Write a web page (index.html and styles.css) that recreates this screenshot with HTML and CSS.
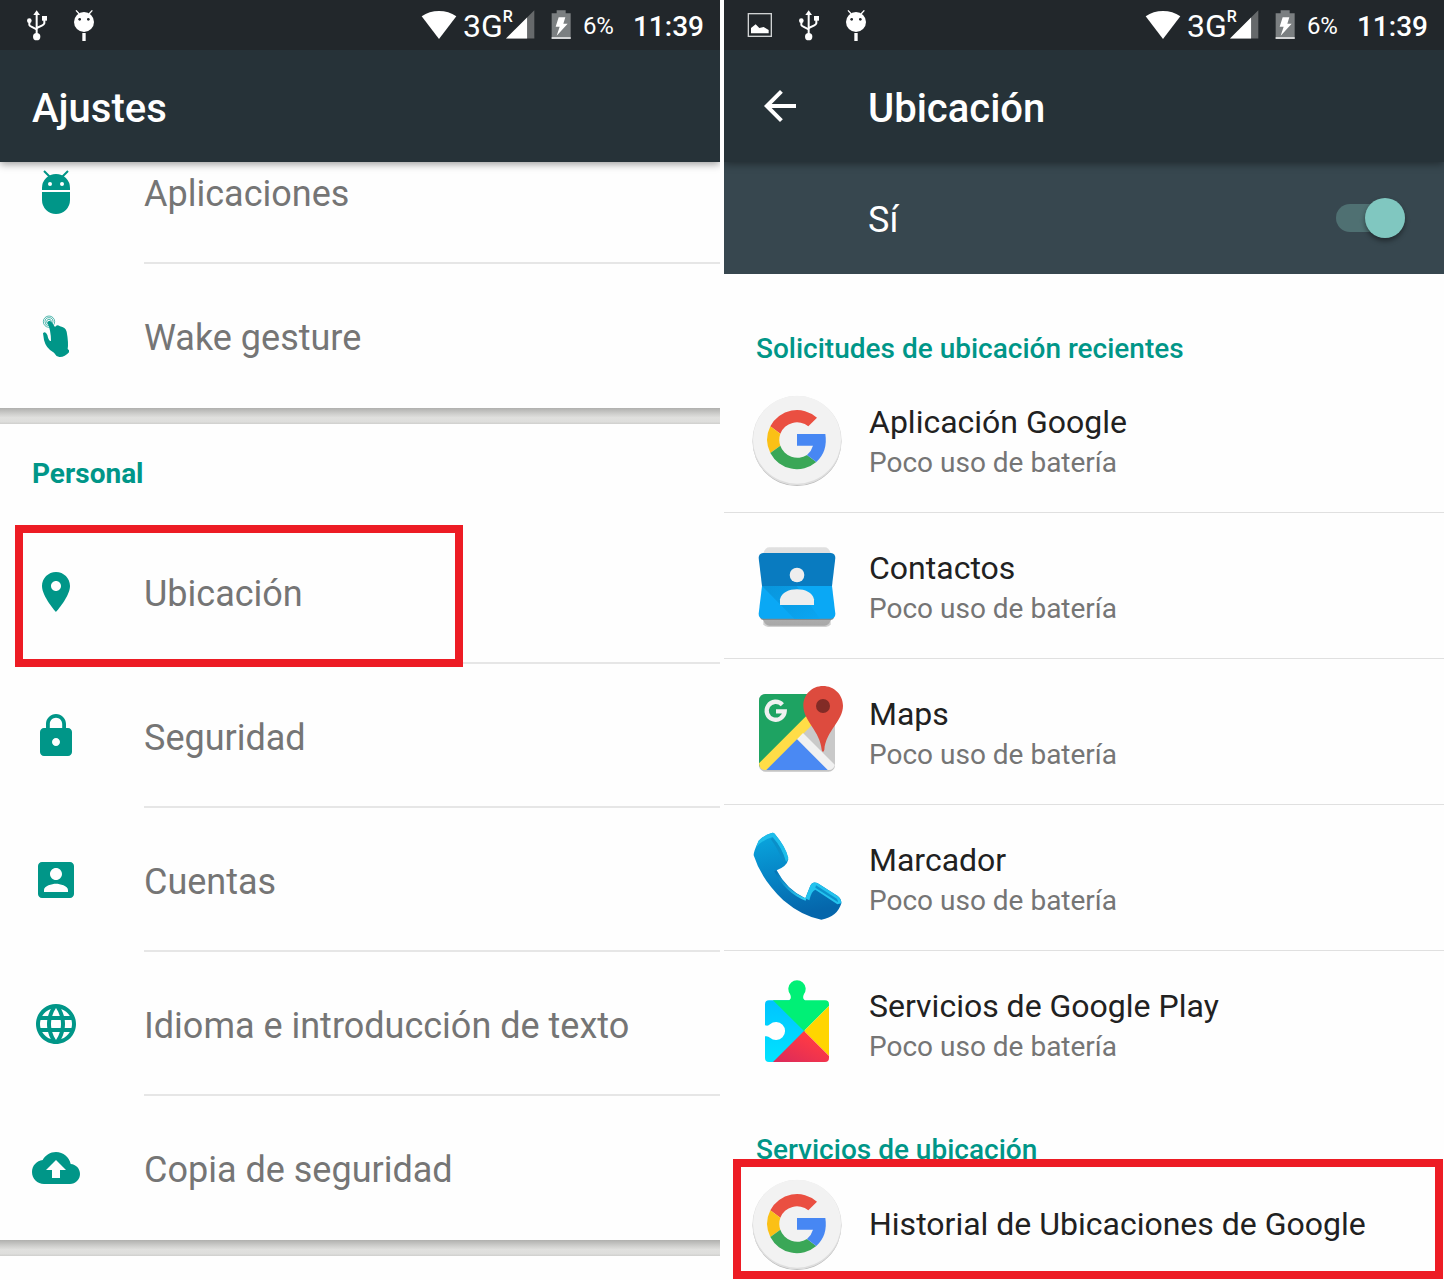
FILE: index.html
```
<!DOCTYPE html>
<html lang="es">
<head>
    <meta charset="UTF-8">
    <meta name="viewport" content="width=device-width, initial-scale=1">
    <title>Ajustes - Ubicación</title>
    <link rel="stylesheet" href="styles.css">
</head>
<body>
    <!-- shared symbols -->
    <svg class="sprite" aria-hidden="true">
        <symbol id="i-usb" viewBox="39 0 144 150">
            <g fill="none" stroke="#fff" stroke-width="6">
                <path d="M110 40V106"/>
                <path d="M88 64V75Q89 78 94 80L110 88"/>
                <path d="M133 58V70Q132 74 127 76L110 84"/>
            </g>
            <path fill="#fff" d="M110 31L120 45H100Z"/>
            <circle cx="88" cy="62" r="7" fill="#fff"/>
            <rect x="126" y="48" width="15" height="14" fill="#fff"/>
            <circle cx="110" cy="110" r="11" fill="#fff"/>
        </symbol>
        <symbol id="i-debug" viewBox="183 0 144 150">
            <path d="M228 31L238 42M277 31L267 42" stroke="#fff" stroke-width="4"/>
            <circle cx="252" cy="66" r="30" fill="#fff"/>
            <circle cx="239" cy="58" r="4" fill="#22272b"/>
            <circle cx="265" cy="58" r="4" fill="#22272b"/>
            <rect x="247" y="99" width="10" height="24" fill="#fff"/>
        </symbol>
        <symbol id="i-wifi" viewBox="66 0 108 150">
            <path fill="#fff" d="M68 49Q91 33 120 33T172 49L120 117Z"/>
        </symbol>
        <symbol id="i-signal" viewBox="323 0 88 150">
            <path fill="#66696b" d="M323 116L409 30V116Z"/>
            <path fill="#fff" d="M323 116L387 52V116Z"/>
        </symbol>
        <symbol id="i-battery" viewBox="457 0 60 150">
            <path fill="#7b7f81" d="M459 40H474V31H501V40H516V117H459Z"/>
            <path fill="#d5d6d7" d="M459 111H516V117H459Z"/>
            <path fill="#fff" d="M480 52H500L494 71H507L474 107L483 80H471Z"/>
        </symbol>
        <symbol id="i-google" viewBox="27 33 288 288">
            <circle cx="171" cy="182" r="133" fill="#b9b9b9"/>
            <circle cx="171" cy="179" r="134" fill="#dedede"/>
            <circle cx="171" cy="176" r="132" fill="#f2f2f2"/>
            <path fill="#ea4f41" d="M91 136A90 90 0 0 1 231 110L205 136A54 54 0 0 0 121 158Z"/>
            <path fill="#fbc016" d="M91 136A90 90 0 0 0 91 216L121 194A54 54 0 0 1 121 158Z"/>
            <path fill="#3aa757" d="M91 216A90 90 0 0 0 229 243L201 222A54 54 0 0 1 121 194Z"/>
            <path fill="#4787f3" d="M171 159H256Q264 211 229 243L201 222Q214 211 219 194H171Z"/>
        </symbol>
    </svg>

    <main class="screens">
        <!-- Ajustes -->
        <section class="screen">
            <div class="status-bar">
                <div class="notifications">
                    <svg class="notif-icon"><use href="#i-usb"/></svg>
                    <svg class="notif-icon"><use href="#i-debug"/></svg>
                </div>
                <div class="system">
                    <svg class="wifi"><use href="#i-wifi"/></svg>
                    <span class="network">3G</span>
                    <span class="roaming">R</span>
                    <svg class="signal"><use href="#i-signal"/></svg>
                    <svg class="battery"><use href="#i-battery"/></svg>
                    <span class="percent">6%</span>
                    <span class="clock">11:39</span>
                </div>
            </div>
            <header class="app-bar">
                <h1>Ajustes</h1>
            </header>

            <nav class="settings">
                <div class="card">
                    <a class="setting" href="#">
                        <svg class="setting-icon" viewBox="0 0 48 48">
                            <path d="M12 3L18 9M36 3L30 9" stroke="#009688" stroke-width="2"/>
                            <path d="M10 22V20A14 14 0 0 1 38 20V22ZM10 24H38V32A14 14 0 0 1 10 32Z"/>
                            <circle cx="18" cy="16" r="2" fill="#fff"/>
                            <circle cx="30" cy="16" r="2" fill="#fff"/>
                        </svg>
                        <span class="setting-name">Aplicaciones</span>
                    </a>
                    <a class="setting" href="#">
                        <svg class="setting-icon" viewBox="96 36 144 144">
                            <g fill="none" stroke="#009688" stroke-width="2">
                                <circle cx="147" cy="65" r="17"/>
                                <circle cx="147" cy="65" r="12"/>
                                <circle cx="147" cy="65" r="7"/>
                            </g>
                            <path d="M142 67Q148 58 155 67L165 81Q171 71 180 79Q196 82 200 95Q206 128 203 147L207 151V157Q194 172 178 171Q167 168 162 158Q138 146 132 120L129 100Q136 92 142 105Q146 124 153 123Q153 92 142 67Z"/>
                        </svg>
                        <span class="setting-name">Wake gesture</span>
                    </a>
                </div>

                <div class="card">
                    <h2 class="card-title">Personal</h2>
                    <a class="setting marked" href="#">
                        <svg class="setting-icon" viewBox="0 0 24 24">
                            <path d="M12 2C8.13 2 5 5.13 5 9c0 5.25 7 13 7 13s7-7.75 7-13c0-3.87-3.13-7-7-7zm0 9.5c-1.38 0-2.5-1.12-2.5-2.5s1.12-2.5 2.5-2.5 2.5 1.12 2.5 2.5-1.12 2.5-2.5 2.5z"/>
                        </svg>
                        <span class="setting-name">Ubicación</span>
                    </a>
                    <a class="setting" href="#">
                        <svg class="setting-icon" viewBox="0 0 24 24">
                            <path d="M18 8h-1V6c0-2.76-2.24-5-5-5S7 3.24 7 6v2H6c-1.1 0-2 .9-2 2v10c0 1.1.9 2 2 2h12c1.1 0 2-.9 2-2V10c0-1.1-.9-2-2-2zm-6 9c-1.1 0-2-.9-2-2s.9-2 2-2 2 .9 2 2-.9 2-2 2zm3.1-9H8.9V6c0-1.71 1.39-3.1 3.1-3.1 1.71 0 3.1 1.39 3.1 3.1v2z"/>
                        </svg>
                        <span class="setting-name">Seguridad</span>
                    </a>
                    <a class="setting" href="#">
                        <svg class="setting-icon" viewBox="0 0 24 24">
                            <path d="M3 5v14c0 1.1.89 2 2 2h14c1.1 0 2-.9 2-2V5c0-1.1-.9-2-2-2H5c-1.11 0-2 .9-2 2zm12 4c0 1.66-1.34 3-3 3s-3-1.34-3-3 1.34-3 3-3 3 1.34 3 3zm-9 8c0-2 4-3.1 6-3.1s6 1.1 6 3.1v1H6v-1z"/>
                        </svg>
                        <span class="setting-name">Cuentas</span>
                    </a>
                    <a class="setting" href="#">
                        <svg class="setting-icon" viewBox="0 0 24 24">
                            <path d="M11.99 2C6.47 2 2 6.48 2 12s4.47 10 9.99 10C17.52 22 22 17.52 22 12S17.52 2 11.99 2zm6.93 6h-2.95c-.32-1.25-.78-2.45-1.38-3.56 1.84.63 3.37 1.91 4.33 3.56zM12 4.04c.83 1.2 1.48 2.53 1.91 3.96h-3.82c.43-1.43 1.08-2.76 1.91-3.96zM4.26 14C4.1 13.36 4 12.69 4 12s.1-1.36.26-2h3.38c-.08.66-.14 1.32-.14 2 0 .68.06 1.34.14 2H4.26zm.82 2h2.95c.32 1.25.78 2.45 1.38 3.56-1.84-.63-3.37-1.9-4.33-3.56zm2.95-8H5.08c.96-1.66 2.49-2.93 4.33-3.56C8.81 5.55 8.35 6.75 8.03 8zM12 19.96c-.83-1.2-1.48-2.53-1.91-3.96h3.82c-.43 1.43-1.08 2.76-1.91 3.96zM14.34 14H9.66c-.09-.66-.16-1.32-.16-2 0-.68.07-1.35.16-2h4.68c.09.65.16 1.32.16 2 0 .68-.07 1.34-.16 2zm.25 5.56c.6-1.11 1.06-2.31 1.38-3.56h2.95c-.96 1.65-2.49 2.93-4.33 3.56zM16.36 14c.08-.66.14-1.32.14-2 0-.68-.06-1.34-.14-2h3.38c.16.64.26 1.31.26 2s-.1 1.36-.26 2h-3.38z"/>
                        </svg>
                        <span class="setting-name">Idioma e introducción de texto</span>
                    </a>
                    <a class="setting" href="#">
                        <svg class="setting-icon" viewBox="0 0 24 24">
                            <path d="M19.35 10.04C18.67 6.59 15.64 4 12 4 9.11 4 6.6 5.64 5.35 8.04 2.34 8.36 0 10.91 0 14c0 3.31 2.69 6 6 6h13c2.76 0 5-2.24 5-5 0-2.64-2.05-4.78-4.65-4.96zM14 13v4h-4v-4H7l5-5 5 5h-3z"/>
                        </svg>
                        <span class="setting-name">Copia de seguridad</span>
                    </a>
                </div>
            </nav>
        </section>

        <!-- Ubicación -->
        <section class="screen">
            <div class="status-bar">
                <div class="notifications">
                    <svg class="notif-icon" viewBox="39 0 144 150">
                        <rect x="73" y="41" width="69" height="68" fill="none" stroke="#d0d2d3" stroke-width="4"/>
                        <path fill="#fff" d="M81 100V84L95 73L106 84L119 81L134 90V100Z"/>
                    </svg>
                    <svg class="notif-icon"><use href="#i-usb"/></svg>
                    <svg class="notif-icon"><use href="#i-debug"/></svg>
                </div>
                <div class="system">
                    <svg class="wifi"><use href="#i-wifi"/></svg>
                    <span class="network">3G</span>
                    <span class="roaming">R</span>
                    <svg class="signal"><use href="#i-signal"/></svg>
                    <svg class="battery"><use href="#i-battery"/></svg>
                    <span class="percent">6%</span>
                    <span class="clock">11:39</span>
                </div>
            </div>
            <header class="app-bar">
                <button class="back" type="button" aria-label="Atrás">
                    <svg viewBox="0 0 24 24"><path d="M20 11H7.83l5.59-5.59L12 4l-8 8 8 8 1.41-1.41L7.83 13H20v-2z"/></svg>
                </button>
                <h1>Ubicación</h1>
            </header>
            <div class="switch-bar">
                <label for="location">Sí</label>
                <input class="switch" id="location" type="checkbox" checked>
            </div>

            <div class="location">
                <h2 class="category">Solicitudes de ubicación recientes</h2>
                <a class="app" href="#">
                    <svg class="app-icon"><use href="#i-google"/></svg>
                    <span class="app-text">
                        <span class="app-name">Aplicación Google</span>
                        <span class="app-usage">Poco uso de batería</span>
                    </span>
                </a>
                <a class="app" href="#">
                    <svg class="app-icon" viewBox="27 471 288 288">
                        <defs>
                            <linearGradient id="sheet" x1="0" y1="0" x2="0" y2="1">
                                <stop offset="0.1" stop-color="#e0e0e0"/>
                                <stop offset="1" stop-color="#a8a8a8"/>
                            </linearGradient>
                            <linearGradient id="fold" x1="0" y1="0" x2="1" y2="1">
                                <stop offset="0" stop-color="#0895dc"/>
                                <stop offset="1" stop-color="#0aa6f2"/>
                            </linearGradient>
                        </defs>
                        <path fill="#d0d0d0" d="M70 520H272V730Q268 738 258 738H84Q74 738 70 730Z"/>
                        <path fill="url(#sheet)" d="M70 516Q76 499 88 499H254Q266 499 272 516V718Q266 734 254 734H88Q76 734 70 718Z"/>
                        <path fill="#7d8a90" d="M60 708H282Q280 717 272 717H70Q62 717 60 708Z"/>
                        <path fill="#097bc0" d="M69 516H273Q286 518 286 531L276 615H66L56 531Q56 518 69 516Z"/>
                        <path fill="#0aa8f5" d="M66 615H276L286 698Q286 712 273 713H69Q56 712 56 698Z"/>
                        <path fill="url(#fold)" d="M66 615H170L240 713H163Z"/>
                        <circle cx="171" cy="582" r="22" fill="#eee"/>
                        <path fill="#eee" d="M120 672V655C125 634 147 625 171 625S217 634 222 655V672Z"/>
                    </svg>
                    <span class="app-text">
                        <span class="app-name">Contactos</span>
                        <span class="app-usage">Poco uso de batería</span>
                    </span>
                </a>
                <a class="app" href="#">
                    <svg class="app-icon" viewBox="27 39 288 288">
                        <defs>
                            <clipPath id="map-tile"><rect x="57" y="69" width="228" height="228" rx="19"/></clipPath>
                        </defs>
                        <rect x="57" y="73" width="228" height="229" rx="19" fill="#c4c4c4"/>
                        <g clip-path="url(#map-tile)">
                            <rect x="57" y="69" width="228" height="228" fill="#c9c9c9"/>
                            <path fill="#1ea362" d="M57 69H285L57 290Z"/>
                            <path fill="#ffdd47" d="M57 277L210 124L232 146L80 297H57Z"/>
                            <path fill="#f1f1f1" d="M189 186L285 282V297H262L171 205Z"/>
                            <path fill="#4a89f3" d="M171 205L263 297H79Z"/>
                        </g>
                        <path fill="none" stroke="#f1f1f1" stroke-width="13" d="M127 101A27 27 0 1 0 134 121H108"/>
                        <path fill="#dd4b3e" d="M249 45C216 45 190 71 190 104C190 150 241 180 245 236Q246 242 249 242T253 236C257 180 309 150 309 104C309 71 282 45 249 45Z"/>
                        <circle cx="249" cy="105" r="21" fill="#822b26"/>
                    </svg>
                    <span class="app-text">
                        <span class="app-name">Maps</span>
                        <span class="app-usage">Poco uso de batería</span>
                    </span>
                </a>
                <a class="app" href="#">
                    <svg class="app-icon" viewBox="27 477 288 288">
                        <defs>
                            <linearGradient id="handset" x1="0" y1="0" x2="0.2" y2="1">
                                <stop offset="0" stop-color="#0aa9e0"/>
                                <stop offset="0.45" stop-color="#0689c9"/>
                                <stop offset="1" stop-color="#0566ab"/>
                            </linearGradient>
                            <linearGradient id="inner-edge" x1="0" y1="0" x2="1" y2="1">
                                <stop offset="0" stop-color="#0573b5"/>
                                <stop offset="1" stop-color="#2fd0f5"/>
                            </linearGradient>
                        </defs>
                        <path fill="url(#handset)" d="M95 486Q76 490 56 509Q40 543 41 553Q62 622 130 688Q188 737 244 746Q292 738 304 697Q305 684 292 674L232 636Q218 630 211 644L196 682Q140 656 110 598Q141 586 145 565Q139 530 104 488Q100 484 95 486Z"/>
                        <path fill="#1fbdea" d="M95 486Q76 490 56 509L48 530Q64 508 98 498Q126 530 138 572Q144 568 145 560Q138 528 104 488Q100 484 95 486Z"/>
                        <path fill="#0b8fc8" d="M98 500Q126 530 136 571L131 575Q112 530 92 504Z"/>
                        <path fill="none" stroke="url(#inner-edge)" stroke-width="7" d="M106 599Q138 662 198 686"/>
                        <path fill="#24c3ee" d="M211 644Q218 630 232 636L292 674Q305 684 304 697L292 700L226 656Q214 660 208 688L196 682Z"/>
                        <path fill="#0c93cd" d="M228 643L288 682Q296 688 294 694L226 650Z"/>
                    </svg>
                    <span class="app-text">
                        <span class="app-name">Marcador</span>
                        <span class="app-usage">Poco uso de batería</span>
                    </span>
                </a>
                <a class="app" href="#">
                    <svg class="app-icon" viewBox="27 45 288 288">
                        <defs>
                            <clipPath id="puzzle">
                                <path d="M87 118H148Q156 112 150 99A26 26 0 1 1 192 99Q186 112 194 118H255A12 12 0 0 1 267 130V291A12 12 0 0 1 255 303H87A12 12 0 0 1 75 291V226Q84 224 90 230A27 27 0 1 0 90 190Q84 197 75 193V130A12 12 0 0 1 87 118Z"/>
                            </clipPath>
                            <linearGradient id="play-blue" x1="0" y1="0" x2="0" y2="1">
                                <stop offset="0" stop-color="#00c3ff"/>
                                <stop offset="1" stop-color="#00e4ff"/>
                            </linearGradient>
                            <linearGradient id="play-red" x1="1" y1="0" x2="0" y2="1">
                                <stop offset="0.3" stop-color="#ff3a44"/>
                                <stop offset="1" stop-color="#d92a5c"/>
                            </linearGradient>
                        </defs>
                        <g clip-path="url(#puzzle)">
                            <rect x="75" y="115" width="120" height="190" fill="url(#play-blue)"/>
                            <path fill="#00f076" d="M99 118V45H275V127L192 210Z"/>
                            <path fill="#ffd500" d="M192 210L275 127V293Z"/>
                            <path fill="url(#play-red)" d="M192 210L285 303H99Z"/>
                        </g>
                    </svg>
                    <span class="app-text">
                        <span class="app-name">Servicios de Google Play</span>
                        <span class="app-usage">Poco uso de batería</span>
                    </span>
                </a>

                <h2 class="category">Servicios de ubicación</h2>
                <a class="app app-single marked" href="#">
                    <svg class="app-icon"><use href="#i-google"/></svg>
                    <span class="app-name">Historial de Ubicaciones de Google</span>
                </a>
            </div>
        </section>
    </main>
</body>
</html>
```
FILE: styles.css
```
:root {
    --accent: #009688;
    --mark: #ed1c24;
    --bar: #263238;
    --bar-light: #37474f;
}

*,
*::before,
*::after {
    box-sizing: border-box;
}

body {
    margin: 0;
    font-family: Roboto, "Noto Sans", sans-serif;
    background: #fefefe;
}

h1, h2 {
    margin: 0;
}

a {
    color: inherit;
    text-decoration: none;
}

.sprite {
    position: absolute;
    width: 0;
    height: 0;
}

.screens {
    display: grid;
    grid-template-columns: 1fr 1fr;
    gap: 4px;
    min-height: 100vh;
}

.screen {
    min-width: 0;
    overflow: hidden;
}

/* status bar */
.status-bar {
    position: relative;
    z-index: 2;
    display: flex;
    justify-content: space-between;
    height: 50px;
    padding: 0 16px 0 13px;
    background: #22272b;
    color: #fff;
}

.notifications,
.system {
    display: flex;
    align-items: center;
}

.notif-icon {
    width: 48px;
    height: 50px;
}

.wifi {
    width: 36px;
    height: 50px;
    margin-right: 6px;
}

.network {
    padding-top: 2px;
    font-size: 32px;
    line-height: 50px;
}

.roaming {
    align-self: flex-start;
    font-size: 16px;
    font-weight: 500;
    line-height: 34px;
}

.signal {
    width: 29px;
    height: 50px;
    margin-left: -7px;
}

.battery {
    width: 20px;
    height: 50px;
    margin: 0 12px 0 16px;
}

.percent {
    margin-right: 19px;
    padding-top: 2px;
    font-size: 24px;
    line-height: 50px;
}

.clock {
    padding-top: 4px;
    font-size: 28px;
    font-weight: 500;
    line-height: 50px;
}

/* app bar */
.app-bar {
    position: relative;
    z-index: 1;
    display: flex;
    align-items: center;
    height: 112px;
    padding: 0 32px;
    background: var(--bar);
    color: #fff;
    box-shadow: 0 2px 8px rgba(0, 0, 0, 0.4);
}

.app-bar h1 {
    padding-top: 6px;
    font-size: 40px;
    font-weight: 500;
    line-height: 48px;
}

.back {
    width: 48px;
    height: 48px;
    margin-right: 64px;
    padding: 0;
    border: none;
    background: none;
    cursor: pointer;
}

.back svg {
    display: block;
    fill: #fff;
}

/* settings list, scrolled a little under the bar */
.settings {
    margin-top: -42px;
}

.card {
    border-bottom: 16px solid #e0e0de;
    border-image: linear-gradient(#b0b0ae, #cdcdcb 35%, #e0e0de 60%, #dededc 85%, #cfcfcd) 0 0 16 0;
    border-image-slice: 0 0 100% 0;
}

.card-title {
    padding: 30px 32px 26px;
    color: var(--accent);
    font-size: 28px;
    font-weight: 700;
    line-height: 40px;
}

.setting {
    position: relative;
    display: flex;
    align-items: center;
    gap: 64px;
    height: 144px;
    padding-left: 32px;
}

.setting-icon {
    flex: none;
    width: 48px;
    height: 48px;
    fill: var(--accent);
}

.setting-name {
    flex: 1;
    display: flex;
    align-items: center;
    height: 100%;
    padding-top: 6px;
    border-bottom: 2px solid #e6e6e6;
    color: #757575;
    font-size: 36px;
    line-height: 44px;
}

.setting:last-child .setting-name {
    border-bottom-color: transparent;
}

/* red frame round a highlighted row */
.marked {
    position: relative;
}

.marked::after {
    content: "";
    position: absolute;
    border: 8px solid var(--mark);
}

.setting.marked::after {
    top: 5px;
    left: 15px;
    width: 448px;
    height: 142px;
    z-index: 1;
}

.app.marked::after {
    top: -9px;
    right: 1px;
    bottom: 1px;
    left: 9px;
}

/* location screen */
.switch-bar {
    display: flex;
    align-items: center;
    justify-content: space-between;
    height: 112px;
    padding: 0 39px 0 144px;
    background: var(--bar-light);
    color: #fff;
    font-size: 36px;
    line-height: 44px;
}

.switch-bar label {
    padding-top: 4px;
}

.switch {
    appearance: none;
    display: flex;
    align-items: center;
    justify-content: flex-end;
    width: 69px;
    height: 28px;
    margin: 0;
    border-radius: 14px;
    background: #4f7072;
    cursor: pointer;
}

.switch::before {
    content: "";
    flex: none;
    width: 40px;
    height: 40px;
    border-radius: 50%;
    background: #80c7c0;
    box-shadow: 0 3px 5px rgba(0, 0, 0, 0.4);
}

.location {
    padding-top: 21px;
}

.category {
    padding: 34px 32px 0;
    height: 72px;
    color: var(--accent);
    font-size: 28px;
    font-weight: 500;
    line-height: 40px;
}

.app {
    display: flex;
    align-items: center;
    gap: 24px;
    height: 146px;
    padding-left: 25px;
    border-bottom: 1px solid #e0e0e0;
}

.app-icon {
    flex: none;
    width: 96px;
    height: 96px;
}

.app-text {
    display: flex;
    flex-direction: column;
    padding-top: 4px;
}

.app-name {
    color: #212121;
    font-size: 32px;
    line-height: 42px;
}

.app-usage {
    color: #757575;
    font-size: 28px;
    line-height: 40px;
}

/* last row of a group has no divider */
.app:has(+ .category) {
    height: 145px;
    border-bottom: none;
}

.app-single {
    height: 112px;
    border-bottom: none;
}
```
